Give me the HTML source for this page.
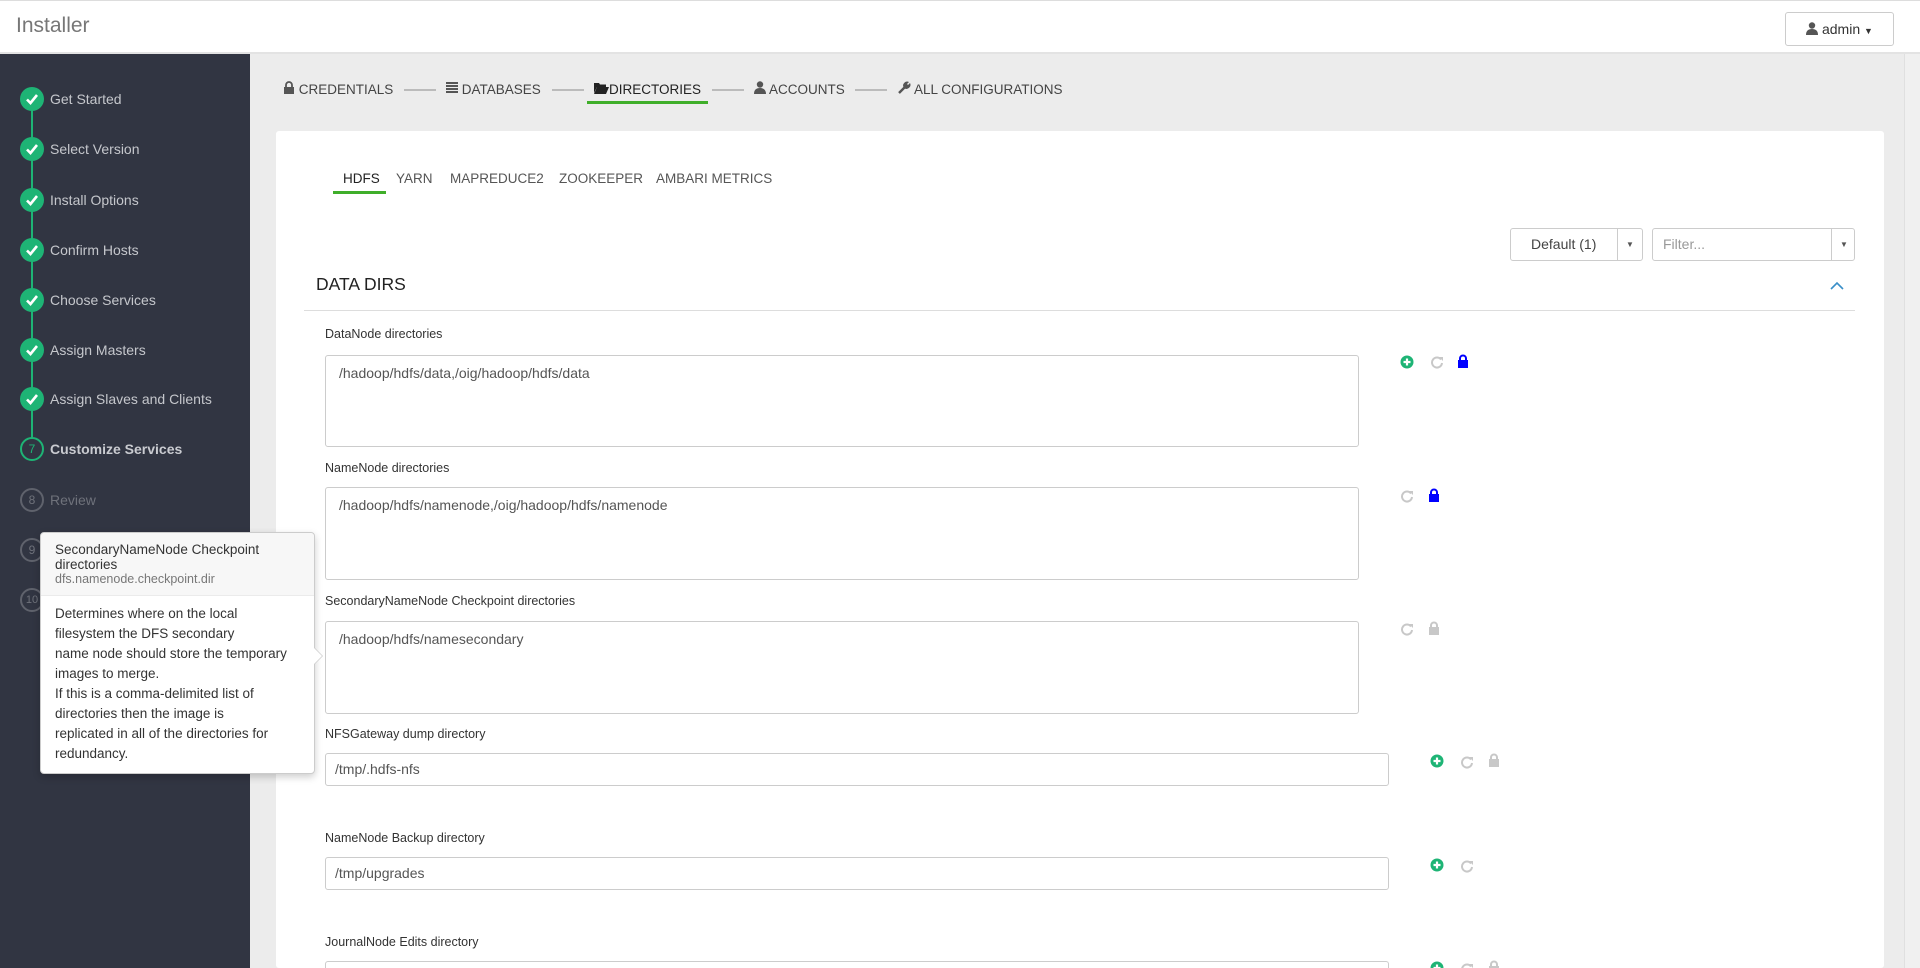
<!DOCTYPE html>
<html style="overflow:hidden;height:968px"><head><meta charset="utf-8"><style>
*{box-sizing:border-box;margin:0;padding:0}
body{width:1920px;height:968px;overflow:hidden;font-family:"Liberation Sans",sans-serif;background:#ececec;position:relative;color:#333}
.abs{position:absolute}
#hdr{left:0;top:0;width:1920px;height:54px;background:#fff;border-bottom:2px solid #e3e3e3;border-top:1px solid #ddd}
#hdr .t{left:16px;top:13px;font-size:21px;color:#777}
#admin{left:1785px;top:11px;width:109px;height:34px;border:1px solid #ccc;border-radius:3px;font-size:14px;color:#333;line-height:32px;text-align:center}
#side{left:0;top:54px;width:250px;height:914px;background:#313542}
.step{position:absolute;left:20px;width:230px;height:24px;font-size:14px;color:#c5c7cc;line-height:24px}
.step .c{position:absolute;left:0;top:0;width:24px;height:24px;border-radius:50%;background:#1eb475}
.step .n{position:absolute;left:0;top:0;width:24px;height:24px;border-radius:50%;border:2px solid #5f626c;color:#6f727b;font-size:12px;text-align:center;line-height:20px}
.step span.l{position:absolute;left:30px;top:0}
#scroll{left:1904px;top:54px;width:16px;height:914px;background:#f0f0f0;border-left:1px solid #e0e0e0}
.nav{top:80px;font-size:13.5px;color:#444;height:20px;line-height:20px}
.dash{top:89px;height:2px;background:#bbb;width:32px}
#panel{left:276px;top:131px;width:1608px;height:837px;background:#fff;border-radius:3px}
.sub{top:171px;font-size:13.5px;color:#555}
.lbl{font-size:12.5px;color:#333}
.ta{border:1px solid #ccc;border-radius:3px;background:#fff;font-size:14px;color:#555;padding:9px 13px}
.ic{width:14px;height:14px}
#wrap{position:absolute;left:0;top:0;width:1920px;height:968px;overflow:hidden}
</style></head><body><div id="wrap">
<div id="hdr" class="abs"><div class="t abs">Installer</div>
<div id="admin" class="abs"><svg width="12" height="13" viewBox="0 0 12 13" style="vertical-align:-1px"><circle cx="6" cy="3.5" r="3.2" fill="#555"/><path d="M0 13 Q0 7 6 7 Q12 7 12 13Z" fill="#555"/></svg> admin <span style="font-size:9px">▼</span></div></div>
<div id="side" class="abs"></div>
<div class="abs" style="left:31px;top:99px;width:2px;height:350px;background:#1eb475"></div>
<div class="abs" style="left:0;top:0">
<div class="step" style="top:87px"><div class="c"><svg width="24" height="24"><path d="M7 12.5l3.5 3.5 6.5-8" stroke="#fff" stroke-width="2.6" fill="none"/></svg></div><span class="l">Get Started</span></div>
<div class="step" style="top:137px"><div class="c"><svg width="24" height="24"><path d="M7 12.5l3.5 3.5 6.5-8" stroke="#fff" stroke-width="2.6" fill="none"/></svg></div><span class="l">Select Version</span></div>
<div class="step" style="top:188px"><div class="c"><svg width="24" height="24"><path d="M7 12.5l3.5 3.5 6.5-8" stroke="#fff" stroke-width="2.6" fill="none"/></svg></div><span class="l">Install Options</span></div>
<div class="step" style="top:238px"><div class="c"><svg width="24" height="24"><path d="M7 12.5l3.5 3.5 6.5-8" stroke="#fff" stroke-width="2.6" fill="none"/></svg></div><span class="l">Confirm Hosts</span></div>
<div class="step" style="top:288px"><div class="c"><svg width="24" height="24"><path d="M7 12.5l3.5 3.5 6.5-8" stroke="#fff" stroke-width="2.6" fill="none"/></svg></div><span class="l">Choose Services</span></div>
<div class="step" style="top:338px"><div class="c"><svg width="24" height="24"><path d="M7 12.5l3.5 3.5 6.5-8" stroke="#fff" stroke-width="2.6" fill="none"/></svg></div><span class="l">Assign Masters</span></div>
<div class="step" style="top:387px"><div class="c"><svg width="24" height="24"><path d="M7 12.5l3.5 3.5 6.5-8" stroke="#fff" stroke-width="2.6" fill="none"/></svg></div><span class="l">Assign Slaves and Clients</span></div>
<div class="step" style="top:437px"><div class="n" style="border-color:#1eb475;color:#1eb475;background:#313542">7</div><span class="l" style="font-weight:bold;color:#c9cbd0">Customize Services</span></div>
<div class="step" style="top:488px"><div class="n">8</div><span class="l" style="color:#6f727b">Review</span></div>
<div class="step" style="top:538px"><div class="n">9</div></div>
<div class="step" style="top:588px"><div class="n" style="font-size:11px">10</div></div>
</div>
<div id="scroll" class="abs"></div>

<div class="abs nav" style="left:283px"><svg width="12" height="13" viewBox="0 0 12 13"><path d="M3 6V4a3 3 0 0 1 6 0v2" stroke="#555" stroke-width="1.8" fill="none"/><rect x="1" y="6" width="10" height="7" fill="#555"/></svg> CREDENTIALS</div>
<div class="abs dash" style="left:404px"></div>
<div class="abs nav" style="left:446px"><svg width="12" height="12" viewBox="0 0 12 12"><path d="M0 1h12M0 4h12M0 7h12M0 10h12" stroke="#555" stroke-width="2"/></svg> DATABASES</div>
<div class="abs dash" style="left:552px"></div>
<div class="abs nav" style="left:594px;color:#222"><svg width="15" height="12" viewBox="0 0 15 12"><path d="M0 1h5l1 1.5h6V5H3L0 11Z" fill="#222"/><path d="M3 5h12l-3 7H0Z" fill="#222"/></svg>DIRECTORIES</div>
<div class="abs" style="left:587px;top:101px;width:121px;height:3px;background:#3fae2a"></div>
<div class="abs dash" style="left:712px"></div>
<div class="abs nav" style="left:754px"><svg width="12" height="13" viewBox="0 0 12 13"><circle cx="6" cy="3.5" r="3.2" fill="#555"/><path d="M0 13 Q0 7 6 7 Q12 7 12 13Z" fill="#555"/></svg> ACCOUNTS</div>
<div class="abs dash" style="left:855px"></div>
<div class="abs nav" style="left:898px"><svg width="13" height="13" viewBox="0 0 13 13"><path d="M1 12L7 6" stroke="#555" stroke-width="2.4"/><path d="M6 7a4 4 0 0 1 5-6l-2 2 1 1 2-2a4 4 0 0 1-6 5Z" fill="#555"/></svg> ALL CONFIGURATIONS</div>

<div id="panel" class="abs"></div>
<div class="abs sub" style="left:343px;color:#222">HDFS</div>
<div class="abs" style="left:333px;top:191px;width:53px;height:3px;background:#3fae2a"></div>
<div class="abs sub" style="left:396px">YARN</div>
<div class="abs sub" style="left:450px">MAPREDUCE2</div>
<div class="abs sub" style="left:559px">ZOOKEEPER</div>
<div class="abs sub" style="left:656px">AMBARI METRICS</div>

<div class="abs" style="left:1510px;top:228px;width:133px;height:33px;border:1px solid #ccc;border-radius:3px;font-size:14px;color:#444;line-height:31px"><span style="position:absolute;left:20px">Default (1)</span><span style="position:absolute;left:106px;top:0;width:1px;height:31px;background:#ccc"></span><span style="position:absolute;left:115px;font-size:8px;color:#555">▼</span></div>
<div class="abs" style="left:1652px;top:228px;width:203px;height:33px;border:1px solid #ccc;border-radius:3px;font-size:14px;color:#999;line-height:31px"><span style="position:absolute;left:10px">Filter...</span><span style="position:absolute;left:178px;top:0;width:1px;height:31px;background:#ccc"></span><span style="position:absolute;left:187px;font-size:8px;color:#555">▼</span></div>

<div class="abs" style="left:316px;top:274px;font-size:17.5px;color:#222">DATA DIRS</div>
<svg class="abs" style="left:1830px;top:281px" width="14" height="9"><path d="M1 8l6-6 6 6" stroke="#3a8fc8" stroke-width="1.6" fill="none"/></svg>
<div class="abs" style="left:304px;top:310px;width:1551px;height:1px;background:#ddd"></div>

<div class="abs lbl" style="left:325px;top:327px">DataNode directories</div>
<div class="abs ta" style="left:325px;top:355px;width:1034px;height:92px">/hadoop/hdfs/data,/oig/hadoop/hdfs/data</div>
<div class="abs lbl" style="left:325px;top:461px">NameNode directories</div>
<div class="abs ta" style="left:325px;top:487px;width:1034px;height:93px">/hadoop/hdfs/namenode,/oig/hadoop/hdfs/namenode</div>
<div class="abs lbl" style="left:325px;top:594px">SecondaryNameNode Checkpoint directories</div>
<div class="abs ta" style="left:325px;top:621px;width:1034px;height:93px">/hadoop/hdfs/namesecondary</div>
<div class="abs lbl" style="left:325px;top:727px">NFSGateway dump directory</div>
<div class="abs ta" style="left:325px;top:753px;width:1064px;height:33px;padding:7px 9px">/tmp/.hdfs-nfs</div>
<div class="abs lbl" style="left:325px;top:831px">NameNode Backup directory</div>
<div class="abs ta" style="left:325px;top:857px;width:1064px;height:33px;padding:7px 9px">/tmp/upgrades</div>
<div class="abs lbl" style="left:325px;top:935px">JournalNode Edits directory</div>
<div class="abs" style="left:325px;top:961px;width:1064px;height:7px;border:1px solid #ccc;border-bottom:none;border-radius:3px 3px 0 0;background:#fff"></div>

<svg width="0" height="0" style="position:absolute"><defs>
<g id="plus"><circle cx="7" cy="7" r="6.5" fill="#1eb475"/><path d="M7 3.5v7M3.5 7h7" stroke="#fff" stroke-width="2.2"/></g>
<g id="ref"><path d="M11 4.5A5 5 0 1 0 12 8" stroke="#c8c8c8" stroke-width="2" fill="none"/><path d="M9 2h4v4z" fill="#c8c8c8"/></g>
<g id="lockb"><path d="M4 6V4.5a3 3 0 0 1 6 0V6" stroke="#0000ff" stroke-width="2" fill="none"/><rect x="2" y="6" width="10" height="8" fill="#0000ff"/></g>
<g id="lockg"><path d="M4 6V4.5a3 3 0 0 1 6 0V6" stroke="#c8c8c8" stroke-width="2" fill="none"/><rect x="2" y="6" width="10" height="8" fill="#c8c8c8"/></g>
</defs></svg>
<svg class="abs ic" style="left:1400px;top:355px"><use href="#plus"/></svg>
<svg class="abs ic" style="left:1430px;top:355px"><use href="#ref"/></svg>
<svg class="abs ic" style="left:1456px;top:354px"><use href="#lockb"/></svg>
<svg class="abs ic" style="left:1400px;top:489px"><use href="#ref"/></svg>
<svg class="abs ic" style="left:1427px;top:488px"><use href="#lockb"/></svg>
<svg class="abs ic" style="left:1400px;top:622px"><use href="#ref"/></svg>
<svg class="abs ic" style="left:1427px;top:621px"><use href="#lockg"/></svg>
<svg class="abs ic" style="left:1430px;top:754px"><use href="#plus"/></svg>
<svg class="abs ic" style="left:1460px;top:755px"><use href="#ref"/></svg>
<svg class="abs ic" style="left:1487px;top:753px"><use href="#lockg"/></svg>
<svg class="abs ic" style="left:1430px;top:858px"><use href="#plus"/></svg>
<svg class="abs ic" style="left:1460px;top:859px"><use href="#ref"/></svg>
<svg class="abs" style="left:1430px;top:961px" width="14" height="7"><use href="#plus"/></svg>
<svg class="abs" style="left:1460px;top:962px" width="14" height="6"><use href="#ref"/></svg>
<svg class="abs" style="left:1487px;top:960px" width="14" height="8"><use href="#lockg"/></svg>

<div class="abs" style="left:40px;top:532px;width:275px;height:242px;background:#fff;border:1px solid #ccc;border-radius:4px;box-shadow:0 3px 8px rgba(0,0,0,.2)">
<div style="background:#f7f7f7;border-bottom:1px solid #ebebeb;padding:9px 14px 7px;height:63px;font-size:13.5px;line-height:15px;color:#333;border-radius:4px 4px 0 0">SecondaryNameNode Checkpoint<br>directories<div style="color:#777;font-size:12.5px">dfs.namenode.checkpoint.dir</div></div>
<div style="padding:8px 14px;font-size:13.5px;line-height:20px;color:#333;white-space:nowrap">Determines where on the local<br>filesystem the DFS secondary<br>name node should store the temporary<br>images to merge.<br>If this is a comma-delimited list of<br>directories then the image is<br>replicated in all of the directories for<br>redundancy.</div>
</div>
<div class="abs" style="left:314px;top:647px;width:0;height:0;border-top:9px solid transparent;border-bottom:9px solid transparent;border-left:9px solid #ccc"></div>
<div class="abs" style="left:314px;top:648px;width:0;height:0;border-top:8px solid transparent;border-bottom:8px solid transparent;border-left:8px solid #fff"></div>
</div></body></html>
